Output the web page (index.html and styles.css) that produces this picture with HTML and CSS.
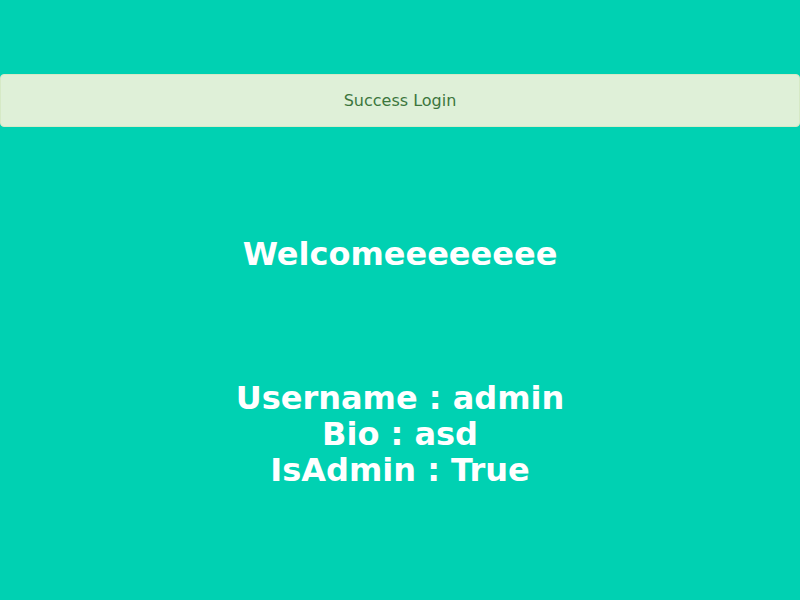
FILE: index.html
```html
<!DOCTYPE html>
<html>
<head>
<meta charset="utf-8">
<link rel="stylesheet" href="styles.css">
</head>
<body>
<div class="page">
  <div class="alert">Success Login</div>
  <h1 class="welcome">Welcomeeeeeeee</h1>
  <div class="info">
    <div>Username : admin</div>
    <div>Bio : asd</div>
    <div>IsAdmin : True</div>
  </div>
</div>
</body>
</html>
```
FILE: styles.css
```css
html, body {
  margin: 0;
  padding: 0;
  background: #00d1b2;
  height: 100%;
}
.page {
  padding-top: 74px;
  font-family: "DejaVu Sans", sans-serif;
  text-align: center;
}
.alert {
  background: #dff0d8;
  border: 1px solid #d6e9c6;
  border-radius: 4px;
  color: #3c763d;
  font-size: 16px;
  line-height: 20px;
  padding: 16px 15px 15px;
}
.welcome {
  color: #fff;
  font-size: 32px;
  font-weight: bold;
  line-height: 36px;
  margin: 109px 0 0 0;
}
.info {
  color: #fff;
  font-size: 32px;
  font-weight: bold;
  line-height: 36px;
  margin-top: 108px;
}
```
